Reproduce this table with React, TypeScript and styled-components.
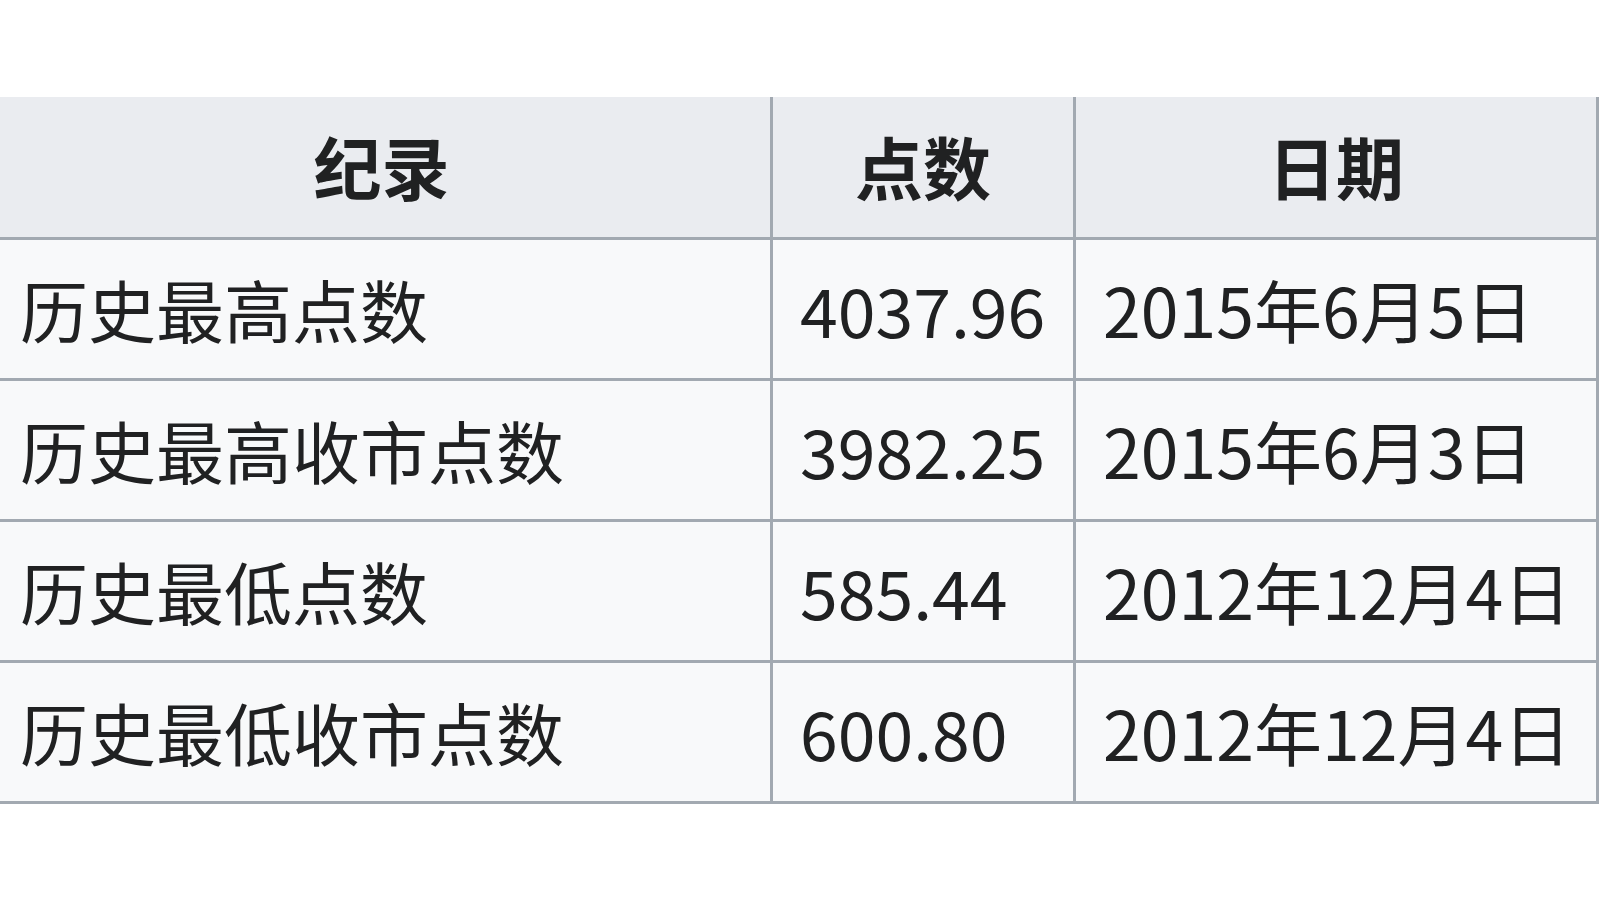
import React from "react";
import styled, { createGlobalStyle } from "styled-components";

const Global = createGlobalStyle`
  html, body {
    margin: 0;
    padding: 0;
    background: #ffffff;
  }
  body {
    font-family: "Noto Sans CJK SC", "Noto Sans", sans-serif;
    color: #202122;
  }
`;

const Page = styled.div`
  width: 1600px;
  height: 900px;
  overflow: hidden;
  padding-top: 97px;
  box-sizing: border-box;
`;

const Table = styled.table`
  margin-left: -10px;
  border-collapse: collapse;
  table-layout: fixed;
  width: 1606px;
  font-family: "Noto Sans CJK SC", "Noto Sans", sans-serif;
  font-size: 68px;
  color: #202122;
`;

const HeadCell = styled.th`
  background: #eaecf0;
  border: 3px solid #a2a9b1;
  border-top: 0;
  height: 141px;
  padding: 0 27px;
  font-weight: 700;
  text-align: center;
  vertical-align: middle;
  line-height: 1.6;
  box-sizing: border-box;
`;

const Cell = styled.td`
  background: #f8f9fa;
  border: 3px solid #a2a9b1;
  height: 141px;
  padding: 2px 27px 0;
  text-align: left;
  vertical-align: middle;
  line-height: 1.6;
  white-space: nowrap;
  box-sizing: border-box;
`;

const rows = [
  ["历史最高点数", "4037.96", "2015年6月5日"],
  ["历史最高收市点数", "3982.25", "2015年6月3日"],
  ["历史最低点数", "585.44", "2012年12月4日"],
  ["历史最低收市点数", "600.80", "2012年12月4日"],
];

export default function App() {
  return (
    <>
      <Global />
      <Page>
        <Table>
          <colgroup>
            <col style={{ width: 780 }} />
            <col style={{ width: 303 }} />
            <col style={{ width: 523 }} />
          </colgroup>
          <thead>
            <tr>
              <HeadCell>纪录</HeadCell>
              <HeadCell>点数</HeadCell>
              <HeadCell>日期</HeadCell>
            </tr>
          </thead>
          <tbody>
            {rows.map((r) => (
              <tr key={r[0]}>
                <Cell>{r[0]}</Cell>
                <Cell>{r[1]}</Cell>
                <Cell>{r[2]}</Cell>
              </tr>
            ))}
          </tbody>
        </Table>
      </Page>
    </>
  );
}
